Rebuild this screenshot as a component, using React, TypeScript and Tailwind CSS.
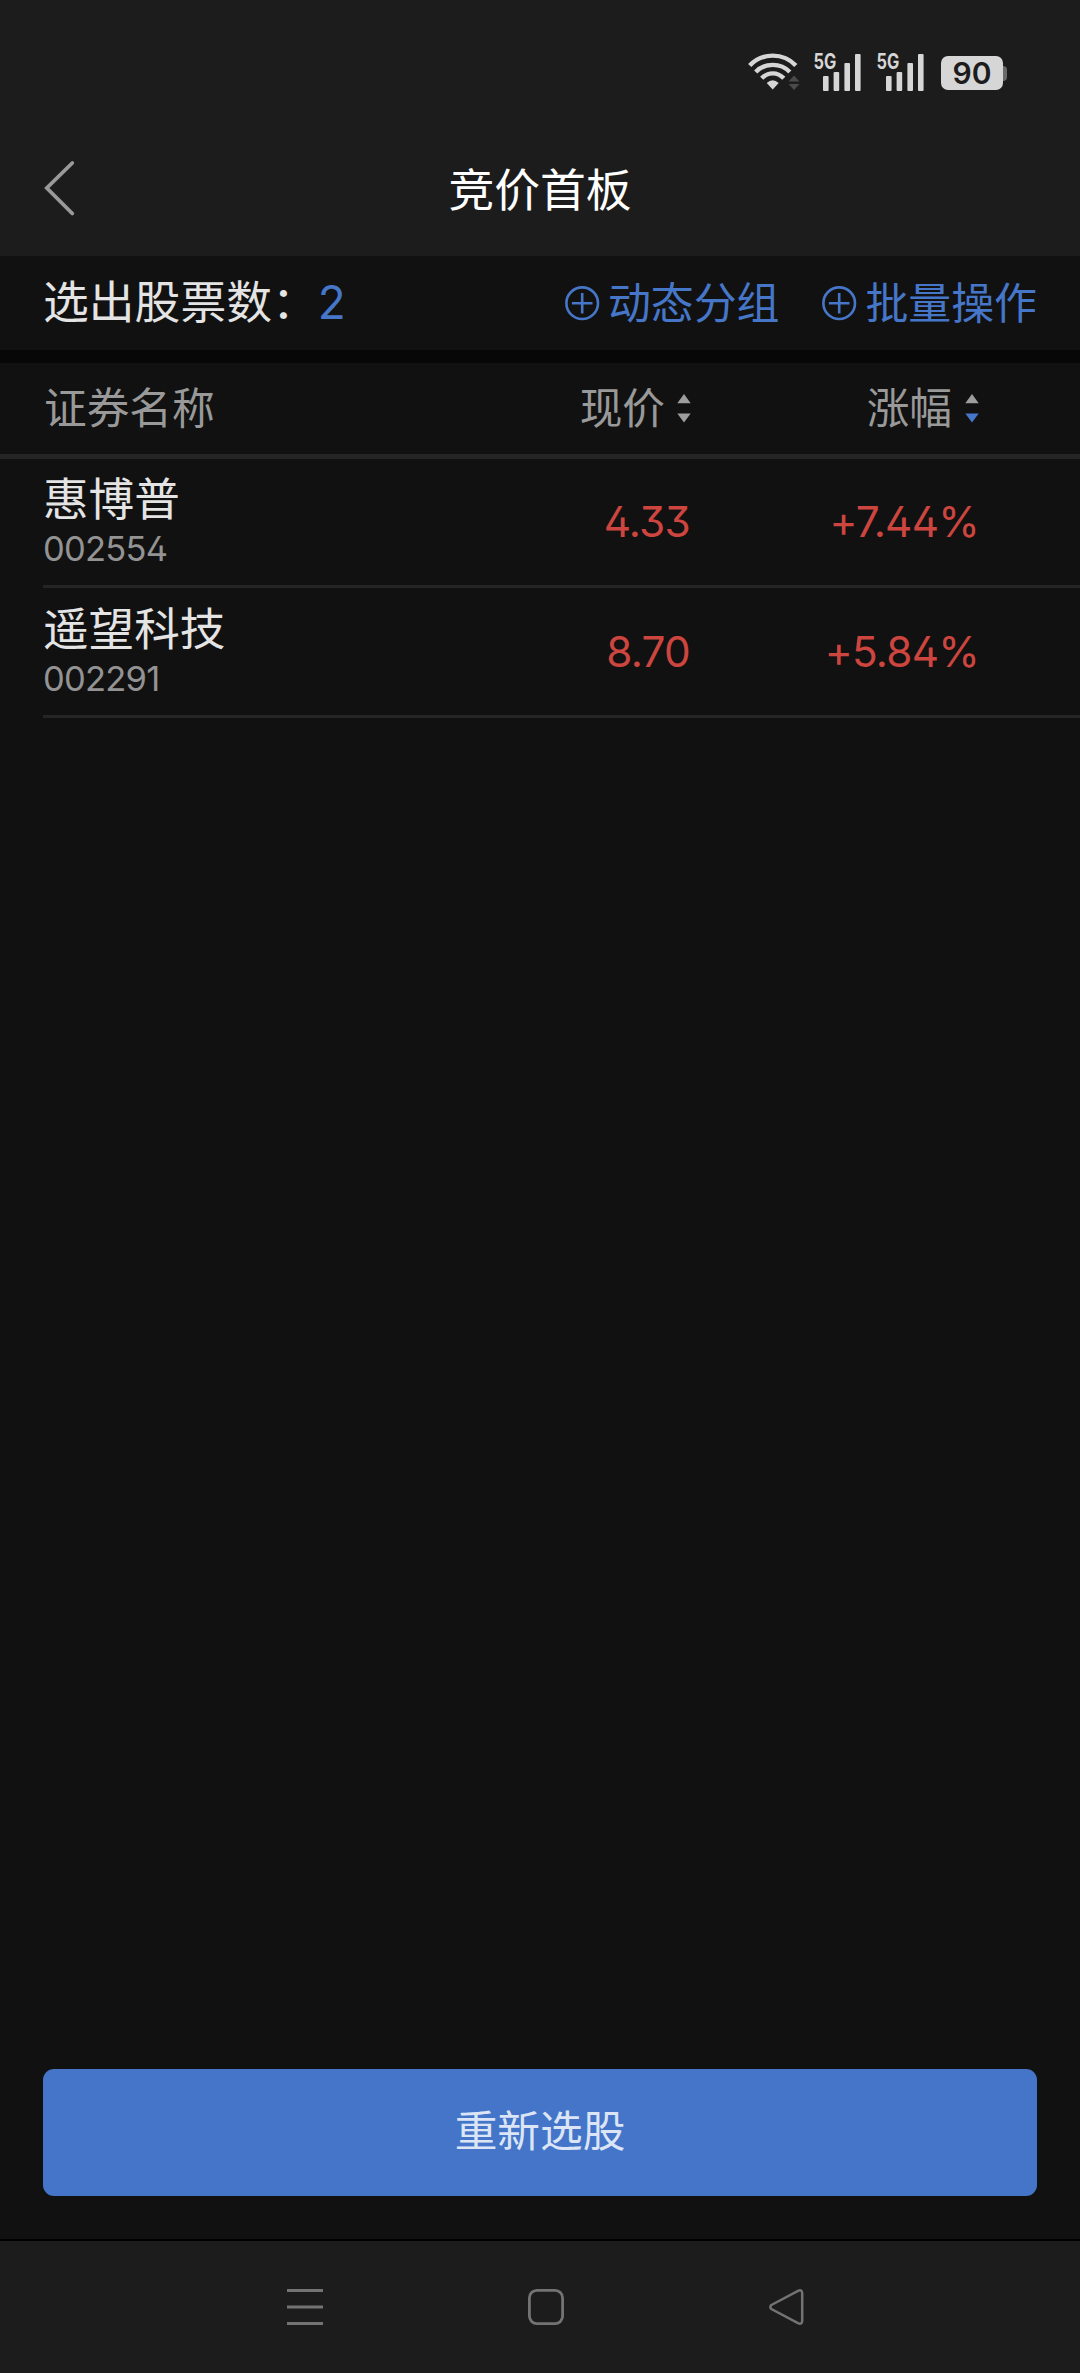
import { useState } from "react"

const stocks = [
  { name: "惠博普", code: "002554", price: "4.33", change: "+7.44%" },
  { name: "遥望科技", code: "002291", price: "8.70", change: "+5.84%" },
]

type SortDir = "none" | "desc"

function Wifi() {
  return (
    <svg className="h-[38px] w-[52px]" viewBox="0 0 52 38" fill="none">
      <g stroke="#d6d6d6" strokeWidth="4.4">
        <path d="M1.7 12.5 C14 -0.7 35.5 -0.7 47.8 12.5" />
        <path d="M7.7 19 C16.7 9.5 32.8 9.5 41.8 19" />
        <path d="M13.7 25.3 C20 18.7 29.5 18.7 35.8 25.3" />
      </g>
      <path d="M18.7 30 Q24.7 24.5 30.7 30 L24.7 36.4 Z" fill="#d6d6d6" />
      <path d="M40.5 28.5 L46 22.5 L51.5 28.5 Z M40.5 31 L46 37 L51.5 31 Z" fill="#4a4a4a" />
    </svg>
  )
}

function Signal() {
  return (
    <svg className="h-[46px] w-[49px]" viewBox="0 0 49 46" fill="#d6d6d6">
      <text
        x="0.5"
        y="24.3"
        textLength="22.8"
        lengthAdjust="spacingAndGlyphs"
        className="font-[Inter,sans-serif] text-[21px] font-bold"
      >
        5G
      </text>
      <rect x="10" y="31" width="5.6" height="15" rx="1" />
      <rect x="20.6" y="27" width="5.6" height="19" rx="1" />
      <rect x="31.4" y="18" width="5.6" height="28" rx="1" />
      <rect x="42" y="9" width="5.6" height="37" rx="1" />
    </svg>
  )
}

function StatusBar() {
  return (
    <div className="flex h-[122px] items-start pt-[45px] pl-[748px]">
      <div className="mt-[8px]">
        <Wifi />
      </div>
      <div className="ml-[13px] flex gap-[14px]">
        <Signal />
        <Signal />
      </div>
      <div className="mt-[11px] ml-[16px] flex items-center">
        <div className="flex h-[34px] w-[62px] items-center justify-center rounded-[7px] bg-[#d6d6d6] font-[Inter,sans-serif] text-[30px] leading-none font-semibold text-[#1c1c1c]">
          90
        </div>
        <div className="h-[15px] w-[4px] rounded-r-[4px] bg-[#6a6a6a]" />
      </div>
    </div>
  )
}

function CirclePlus() {
  return (
    <svg className="size-[35px]" viewBox="0 0 35 35" fill="none" stroke="#4676c8" strokeWidth="2.6">
      <circle cx="17.2" cy="17.2" r="15.8" />
      <path d="M6.9 17.2 H27.5 M17.2 6.9 V27.5" />
    </svg>
  )
}

function SortArrows({ dir }: { dir: SortDir }) {
  return (
    <svg className="h-[30px] w-[14px]" viewBox="0 0 14 30">
      <path d="M0.3 10.2 L7 1 L13.7 10.2 Z" fill="#9d9d9d" />
      <path d="M0.3 20.4 L7 29.6 L13.7 20.4 Z" fill={dir === "desc" ? "#4676c8" : "#9d9d9d"} />
    </svg>
  )
}

function ActionButton({ label }: { label: string }) {
  return (
    <button className="flex items-center gap-[8px] text-[42.9px] leading-none text-[#4676c8]">
      <CirclePlus />
      <span>{label}</span>
    </button>
  )
}

function StockRow({ stock }: { stock: (typeof stocks)[0] }) {
  return (
    <div className="ml-[43px] flex h-[130px] items-center border-b-[3px] border-[#252525]">
      <div className="w-[400px] pt-[3px]">
        <div className="text-[45.6px] leading-[52px] text-[#e4e4e4]">{stock.name}</div>
        <div className="text-[34.5px] leading-[46px] tracking-[-0.022em] text-[#939393]">{stock.code}</div>
      </div>
      <div className="w-[247px] pt-[2px] text-right text-[42.3px] leading-none tracking-[-0.018em] text-[#cd453f]">
        {stock.price}
      </div>
      <div className="w-[289px] pt-[2px] text-right text-[42.3px] leading-none tracking-[-0.018em] text-[#cd453f]">
        {stock.change}
      </div>
    </div>
  )
}

function NavBar() {
  return (
    <div className="flex h-[134px] items-center border-t-2 border-black bg-[#1c1c1c] pl-[286px]">
      <svg className="size-[38px]" viewBox="0 0 38 38" stroke="#737373" strokeWidth="3">
        <path d="M1 2.5 H37 M1 19 H37 M1 35.5 H37" />
      </svg>
      <svg className="ml-[203px] size-[38px]" viewBox="0 0 38 38" fill="none" stroke="#737373" strokeWidth="2.8">
        <rect x="2.4" y="2.4" width="33.2" height="33.2" rx="7.5" />
      </svg>
      <svg className="ml-[203px] size-[38px]" viewBox="0 0 38 38" fill="none" stroke="#737373" strokeWidth="2.5">
        <path d="M3.4 17 L30 2.8 Q34.2 1.2 34.2 5.3 V32.7 Q34.2 36.8 30 35.2 L3.4 21 Q1.2 19 3.4 17 Z" />
      </svg>
    </div>
  )
}

export default function App() {
  const [sort] = useState<SortDir>("desc")

  return (
    <div className="flex h-[2373px] w-[1080px] flex-col overflow-hidden bg-[#111111] font-[Inter,'Noto_Sans_CJK_SC',sans-serif] [font-feature-settings:'cv02','cv09']">
      <header className="h-[256px] shrink-0 bg-[#1c1c1c]">
        <StatusBar />
        <div className="grid h-[134px] grid-cols-[200px_1fr_200px] items-center">
          <svg
            className="ml-[43px] h-[58px] w-[34px]"
            viewBox="0 0 34 58"
            fill="none"
            stroke="#999999"
            strokeWidth="3.8"
            strokeLinecap="round"
          >
            <path d="M29.3 3 L3.8 28 L29.3 53.5" />
          </svg>
          <h1 className="pt-[3px] text-center text-[45.8px] leading-none text-white">竞价首板</h1>
        </div>
      </header>

      <div className="flex h-[94px] shrink-0 items-center justify-between px-[43px]">
        <div className="flex items-center text-[45.8px] leading-none text-[#e4e4e4]">
          选出股票数：<span className="text-[#4676c8]">2</span>
        </div>
        <div className="flex gap-[43px]">
          <ActionButton label="动态分组" />
          <ActionButton label="批量操作" />
        </div>
      </div>

      <div className="h-[13px] shrink-0 bg-[#070707]" />

      <div className="flex h-[96px] shrink-0 items-center border-b-[5px] border-[#252525] pl-[44px] text-[42.7px] leading-none text-[#999999]">
        <div className="w-[400px] pt-[2px]">证券名称</div>
        <div className="flex w-[247px] items-center justify-end gap-[12px]">
          <span className="pt-[2px]">现价</span>
          <SortArrows dir="none" />
        </div>
        <div className="flex w-[288px] items-center justify-end gap-[13px]">
          <span className="pt-[2px]">涨幅</span>
          <SortArrows dir={sort} />
        </div>
      </div>

      <main className="-mt-px flex-1">
        {stocks.map((stock) => (
          <StockRow key={stock.code} stock={stock} />
        ))}
      </main>

      <div className="px-[43px] pb-[43px]">
        <button className="h-[127px] w-full rounded-[11px] bg-[#4575c8] text-[42.7px] leading-none text-[#dbe5f6]">
          重新选股
        </button>
      </div>

      <NavBar />
    </div>
  )
}
